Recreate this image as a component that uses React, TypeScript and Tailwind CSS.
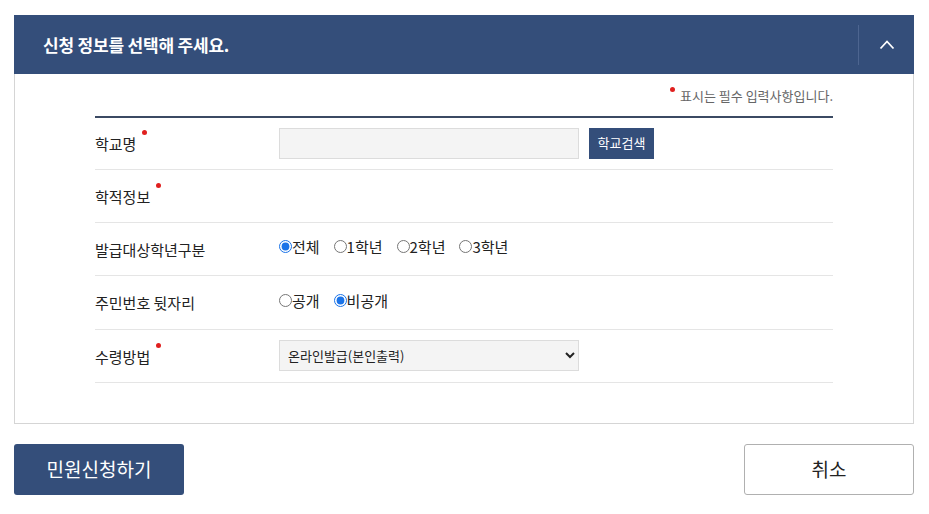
const font = { fontFamily: '"Noto Sans CJK KR", "Noto Sans", sans-serif' };

function Req() {
  return <span className="absolute -right-[11px] -top-[3px] h-[5px] w-[5px] rounded-full bg-[#e0201f]" />;
}

function Label({ text, required }: { text: string; required?: boolean }) {
  return (
    <div className="w-[184px] shrink-0 pt-[3px] text-[15px] text-[#222]">
      <span className="relative">
        {text}
        {required && <Req />}
      </span>
    </div>
  );
}

function Radio({ name, label, checked }: { name: string; label: string; checked?: boolean }) {
  return (
    <label className="mr-[14px] flex items-center text-[15px] text-[#222]">
      <input
        type="radio"
        name={name}
        defaultChecked={checked}
        className="m-0 h-[13px] w-[13px] accent-[#1a73e8]"
      />
      <span className="leading-none">{label}</span>
    </label>
  );
}

function Caret() {
  return (
    <svg width="16" height="11" viewBox="0 0 16 11" fill="none">
      <polyline points="1.5,9.5 8,2.5 14.5,9.5" stroke="currentColor" strokeWidth="1.8" />
    </svg>
  );
}

export default function App() {
  return (
    <div className="min-h-[514px] bg-white px-[14px] pt-[15px]" style={font}>
      <div className="w-[900px]">
        {/* Section header */}
        <div className="flex h-[59px] items-center bg-[#344e7a]">
          <h2 className="flex-1 pl-[29px] text-[17px] font-bold tracking-[-0.2px] text-white">
            신청 정보를 선택해 주세요.
          </h2>
          <div className="h-[40px] w-px bg-[#4d6590]" />
          <button className="flex w-[55px] items-center justify-center text-white">
            <Caret />
          </button>
        </div>

        {/* Form panel */}
        <div className="border border-t-0 border-[#d5d5d5] px-[80px] pb-[40px]">
          <p className="pb-[10px] pt-[12px] text-right text-[13px] text-[#666]">
            <span className="relative mr-[9px]">
              <span className="absolute -left-[1px] top-[1px] h-[5px] w-[5px] rounded-full bg-[#e0201f]" />
            </span>
            표시는 필수 입력사항입니다.
          </p>
          <div className="border-t-2 border-[#3b4a63]">
            <div className="flex h-[52px] items-center border-b border-[#e5e5e5]">
              <Label text="학교명" required />
              <input
                type="text"
                className="h-[31px] w-[300px] border border-[#dcdcdc] bg-[#f4f4f4] px-2 text-[14px] outline-none"
              />
              <button className="ml-[10px] h-[31px] w-[65px] bg-[#344e7a] text-[13px] text-white">
                학교검색
              </button>
            </div>
            <div className="flex h-[53px] items-center border-b border-[#e5e5e5]">
              <Label text="학적정보" required />
            </div>
            <div className="flex h-[53px] items-center border-b border-[#e5e5e5]">
              <Label text="발급대상학년구분" />
              <div className="-mt-[4px] flex items-center">
                <Radio name="grade" label="전체" checked />
                <Radio name="grade" label="1학년" />
                <Radio name="grade" label="2학년" />
                <Radio name="grade" label="3학년" />
              </div>
            </div>
            <div className="flex h-[54px] items-center border-b border-[#e5e5e5]">
              <Label text="주민번호 뒷자리" />
              <div className="-mt-[4px] flex items-center">
                <Radio name="rrn" label="공개" />
                <Radio name="rrn" label="비공개" checked />
              </div>
            </div>
            <div className="flex h-[53px] items-center border-b border-[#e5e5e5]">
              <Label text="수령방법" required />
              <select className="h-[31px] w-[300px] border border-[#dcdcdc] bg-[#f4f4f4] px-[4px] text-[13px] text-[#222] outline-none">
                <option>온라인발급(본인출력)</option>
              </select>
            </div>
          </div>
        </div>

        {/* Actions */}
        <div className="mt-[20px] flex justify-between">
          <button className="h-[51px] w-[170px] rounded-[3px] bg-[#344e7a] text-[19px] text-white">
            민원신청하기
          </button>
          <button className="h-[51px] w-[170px] rounded-[3px] border border-[#b0b0b0] bg-white text-[19px] text-[#222]">
            취소
          </button>
        </div>
      </div>
    </div>
  );
}
